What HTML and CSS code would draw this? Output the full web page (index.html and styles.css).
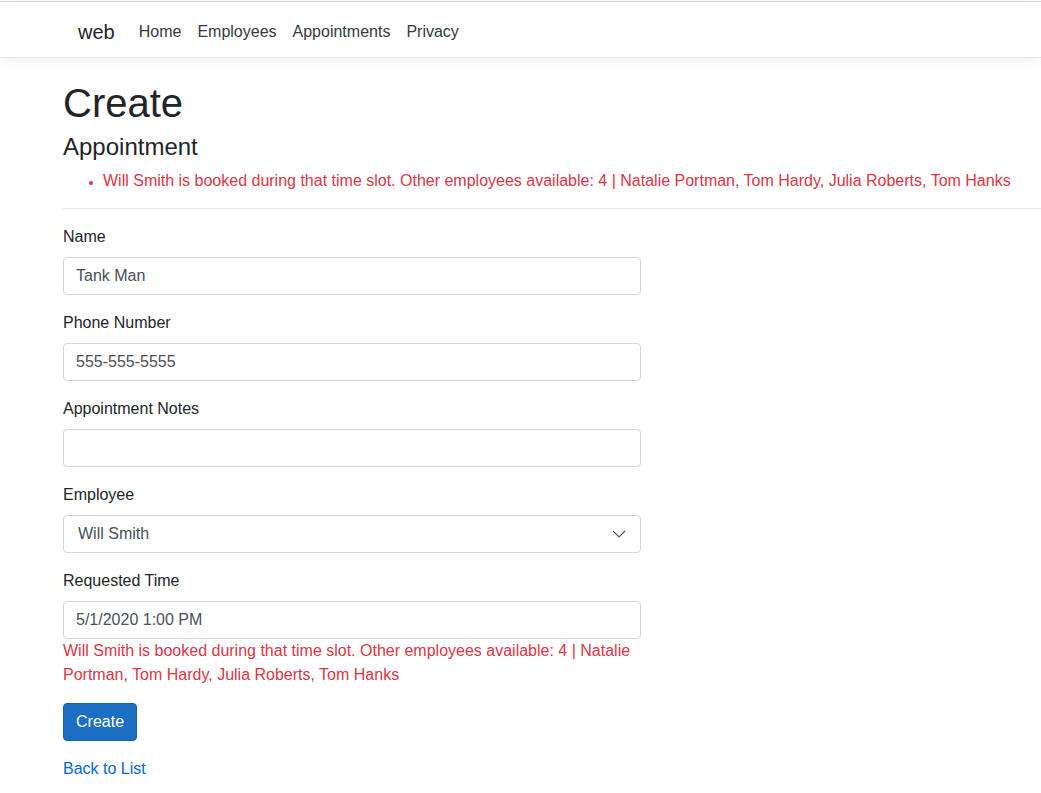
FILE: index.html
```html
<!DOCTYPE html>
<html lang="en">
<head>
<meta charset="utf-8">
<title>Create - web</title>
<link rel="stylesheet" href="styles.css">
</head>
<body>
<header class="navbar">
  <nav class="nav-inner">
    <a class="brand" href="#">web</a>
    <ul class="nav-links">
      <li><a href="#">Home</a></li>
      <li><a href="#">Employees</a></li>
      <li><a href="#">Appointments</a></li>
      <li><a href="#">Privacy</a></li>
    </ul>
  </nav>
</header>
<main class="container">
  <h1 class="title">Create</h1>
  <h4 class="subtitle">Appointment</h4>
  <ul class="summary">
    <li>Will Smith is booked during that time slot. Other employees available: 4 | Natalie Portman, Tom Hardy, Julia Roberts, Tom Hanks</li>
  </ul>
  <hr class="rule">
  <form class="form">
    <div class="group">
      <label class="label">Name</label>
      <input class="control" type="text" value="Tank Man">
    </div>
    <div class="group">
      <label class="label">Phone Number</label>
      <input class="control" type="text" value="555-555-5555">
    </div>
    <div class="group">
      <label class="label">Appointment Notes</label>
      <input class="control" type="text" value="">
    </div>
    <div class="group">
      <label class="label">Employee</label>
      <select class="control select">
        <option>Will Smith</option>
      </select>
    </div>
    <div class="group">
      <label class="label">Requested Time</label>
      <input class="control" type="text" value="5/1/2020 1:00 PM">
      <span class="error">Will Smith is booked during that time slot. Other employees available: 4 | Natalie Portman, Tom Hardy, Julia Roberts, Tom Hanks</span>
    </div>
    <div class="group">
      <button class="btn" type="button">Create</button>
    </div>
  </form>
  <div class="back"><a href="#">Back to List</a></div>
</main>
</body>
</html>
```
FILE: styles.css
```css
* { box-sizing: border-box; }
html, body { margin: 0; padding: 0; }
body {
  font-family: "Liberation Sans", Arial, sans-serif;
  font-size: 16px;
  line-height: 1.5;
  color: #212529;
  background: #fff;
  padding-top: 1px;
}
a { text-decoration: none; }

.navbar {
  border-top: 1px solid #d2d2d2;
  border-bottom: 1px solid #e5e5e5;
  box-shadow: 0 4px 12px rgba(0,0,0,.05);
  height: 57px;
  background: #fff;
}
.nav-inner {
  display: flex;
  align-items: center;
  height: 55px;
  padding-left: 78px;
  padding-top: 4px;
}
.brand {
  font-size: 20px;
  color: #212529;
  margin-right: 16px;
  line-height: 30px;
}
.nav-links {
  display: flex;
  list-style: none;
  margin: 0;
  padding: 0;
}
.nav-links a {
  display: block;
  padding: 8px;
  color: #343a40;
}

.container {
  padding-left: 63px;
  padding-bottom: 16px;
}
.title {
  font-size: 40px;
  font-weight: 400;
  line-height: 1.2;
  margin: 21px 0 6px;
}
.subtitle {
  font-size: 24px;
  font-weight: 400;
  line-height: 1.2;
  margin: 0 0 7px;
}
.summary {
  color: #dc3545;
  margin: 0;
  padding-left: 40px;
}
.summary li { font-size: 16px; }
.summary li::marker { font-size: 12px; }
.rule {
  border: 0;
  border-top: 1px solid rgba(0,0,0,.1);
  margin: 15px 0 16px;
}
.form { width: 578px; }
.group { margin-bottom: 16px; }
.label {
  display: inline-block;
  margin-bottom: 8px;
}
.control {
  display: block;
  width: 100%;
  height: 38px;
  padding: 6px 12px;
  font-family: inherit;
  font-size: 16px;
  line-height: 1.5;
  color: #495057;
  background: #fff;
  border: 1px solid #ced4da;
  border-radius: 4px;
}
.select {
  -webkit-appearance: none;
  appearance: none;
  padding-left: 14px;
  background-image: url("data:image/svg+xml,%3Csvg xmlns='http://www.w3.org/2000/svg' width='14' height='8' viewBox='0 0 14 8'%3E%3Cpath d='M1 1l6 6 6-6' fill='none' stroke='%23555' stroke-width='1.1'/%3E%3C/svg%3E");
  background-repeat: no-repeat;
  background-position: right 14px center;
}
.error {
  display: block;
  color: #dc3545;
}
.btn {
  display: inline-block;
  height: 38px;
  padding: 6px 12px;
  font-family: inherit;
  font-size: 16px;
  line-height: 1.5;
  color: #fff;
  background: #1b6ec2;
  border: 1px solid #1861ac;
  border-radius: 4px;
}
.back a { color: #0366d6; }
```
